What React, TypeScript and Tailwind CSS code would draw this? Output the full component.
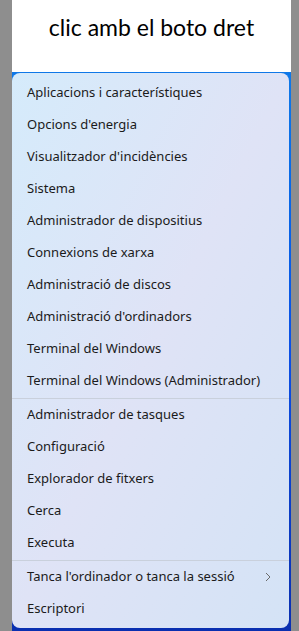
import React from "react";

const group1 = [
  "Aplicacions i característiques",
  "Opcions d'energia",
  "Visualitzador d'incidències",
  "Sistema",
  "Administrador de dispositius",
  "Connexions de xarxa",
  "Administració de discos",
  "Administració d'ordinadors",
  "Terminal del Windows",
  "Terminal del Windows (Administrador)",
];
const group2 = [
  "Administrador de tasques",
  "Configuració",
  "Explorador de fitxers",
  "Cerca",
  "Executa",
];

function Item({ label, chevron }: { label: string; chevron?: boolean }) {
  return (
    <div className="h-[32px] shrink-0 flex items-center justify-between pl-[15px] pr-[18px] text-[13px] text-[#1b1b1b] whitespace-nowrap">
      <span>{label}</span>
      {chevron && (
        <svg width="6" height="10" viewBox="0 0 6 10" fill="none">
          <path d="M1 1l4 4-4 4" stroke="#6b6b6b" strokeWidth="1" />
        </svg>
      )}
    </div>
  );
}

export default function App() {
  return (
    <div className="w-[299px] h-[631px] bg-[#8e8e8e] pl-[12px] pr-[8px] flex flex-col">
      <div className="h-[72px] shrink-0 bg-white flex items-center justify-center pb-[18px]">
        <span className="text-[23px] text-black" style={{ fontFamily: "Lato, sans-serif" }}>
          clic amb el boto dret
        </span>
      </div>
      <div className="flex-1 bg-gradient-to-b from-[#0f78e8] via-[#0b4fe6] to-[#0a2fb0] pt-[1px] pr-[2px] pb-[3px] flex">
        <div
          className="flex-1 rounded-[8px] bg-gradient-to-br from-[#d5ebfb] via-[#dfe3f6] to-[#d4e3f6] pt-[4px] pb-[3px] flex flex-col"
          style={{ fontFamily: "'Noto Sans', sans-serif" }}
        >
          {group1.map((l) => (
            <Item key={l} label={l} />
          ))}
          <div className="h-px shrink-0 mt-px bg-[#c9d0dc]" />
          {group2.map((l) => (
            <Item key={l} label={l} />
          ))}
          <div className="h-px shrink-0 mt-px bg-[#c9d0dc]" />
          <Item label="Tanca l'ordinador o tanca la sessió" chevron />
          <Item label="Escriptori" />
        </div>
      </div>
    </div>
  );
}
